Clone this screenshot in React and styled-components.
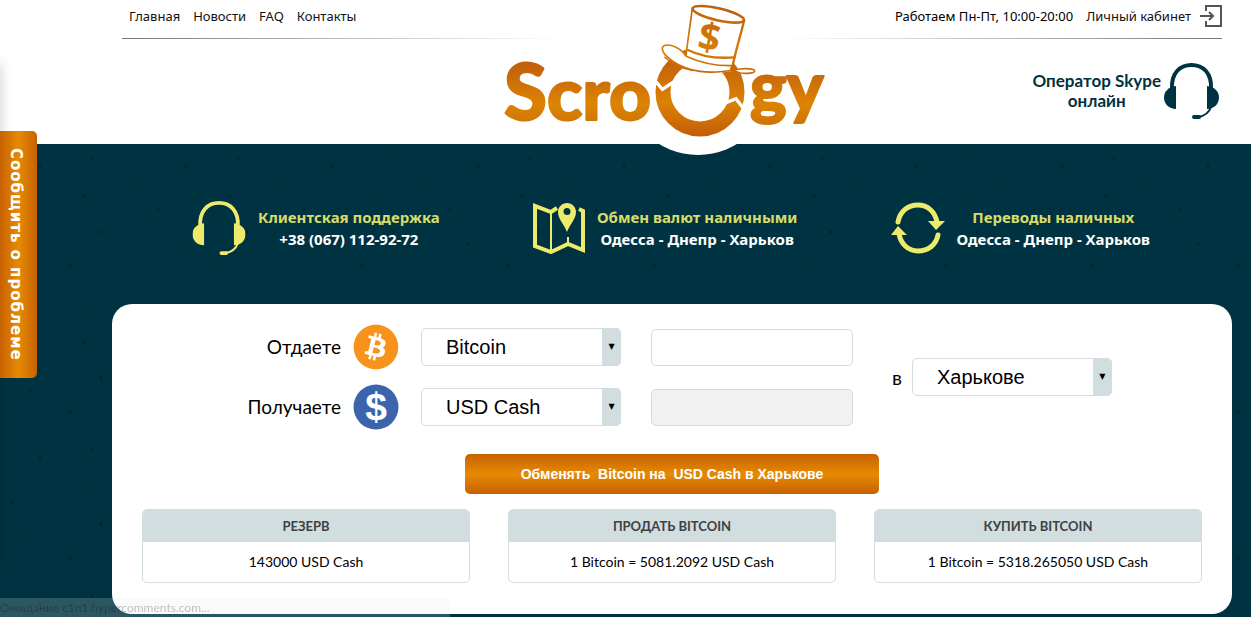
import React, { useState } from 'react'
import styled, { createGlobalStyle } from 'styled-components'
import { FaBitcoin } from 'react-icons/fa'

const GlobalStyle = createGlobalStyle`
  * { box-sizing: border-box; }
  body {
    margin: 0;
    background: #003341;
    color: #000;
    font-family: Lato, 'Noto Sans', sans-serif;
  }
`

const Page = styled.div`
  min-height: 100vh;
  background-color: #003341;
  background-image:
    radial-gradient(circle at 40px 20px, #001a26 0, transparent 2px),
    radial-gradient(circle at 101px 86px, #001a26 0, transparent 2px),
    radial-gradient(circle at 70px 120px, #00222e 0, transparent 2px),
    radial-gradient(circle at 12px 64px, #00222e 0, transparent 2px),
    radial-gradient(circle at 128px 38px, #00222e 0, transparent 2px),
    radial-gradient(circle at 92px 12px, #00222e 0, transparent 2px),
    radial-gradient(circle at 30px 98px, #00222e 0, transparent 2px),
    radial-gradient(circle at 84px 50px, #00222e 0, transparent 2px);
  background-size: 146px 146px;
`

const Header = styled.header`
  background: #fff;
  padding-left: 93px;
`

const HeaderInner = styled.div`
  max-width: 1100px;
  margin: 0 auto;
  display: grid;
  grid-template-columns: 1fr;
  grid-template-rows: 39px 105px;
`

const TopBar = styled.div`
  grid-area: 1 / 1;
  display: flex;
  justify-content: space-between;
  padding: 0 0 7px 7px;
  background: linear-gradient(to right, #777 0, #fff 40%, #fff 60%, #777 100%) bottom / 100% 1px no-repeat;
`

const Nav = styled.nav`
  display: flex;
  align-items: center;
  gap: 13px;
`

const NavLink = styled.a`
  color: #111;
  font-family: 'Noto Sans', sans-serif;
  font-size: 13px;
  line-height: 18px;
  text-decoration: none;
`

const Hours = styled.span`
  font-family: 'Noto Sans', sans-serif;
  font-size: 13px;
  line-height: 18px;
`

const AccountLink = styled(NavLink)`
  display: flex;
  align-items: center;
  gap: 9px;
`

const LogoLink = styled.a`
  grid-area: 1 / 1 / 3 / 2;
  justify-self: center;
  z-index: 1;
  margin-bottom: -12px;
  margin-right: 8px;

  svg { display: block; }
`

const Operator = styled.a`
  grid-area: 2 / 1;
  justify-self: end;
  align-self: start;
  display: flex;
  align-items: center;
  gap: 3px;
  padding: 24px 3px 0 0;
  color: #003341;
  font-size: 17px;
  font-weight: 700;
  line-height: 20px;
  text-align: center;
  text-decoration: none;
`

const Main = styled.main`
  padding-left: 93px;
`

const Content = styled.div`
  max-width: 1120px;
  margin: 0 auto;
`

const Features = styled.section`
  display: flex;
  justify-content: space-between;
  padding: 57px 82px 49px 80px;
`

const Feature = styled.div`
  display: flex;
  align-items: center;
  gap: 12px;
  color: #fff;
  font-family: 'Noto Sans', sans-serif;
  font-size: 15px;
  font-weight: 700;
  line-height: 22px;
  text-align: center;
`

const FeatureTitle = styled.div`
  color: #d8dc6a;
`

const Card = styled.form`
  background: #fff;
  border-radius: 20px;
  padding: 20px 30px 31px;
`

const Exchange = styled.div`
  display: flex;
  align-items: center;
`

const Rows = styled.div`
  display: flex;
  flex-direction: column;
  gap: 14px;
`

const Row = styled.div`
  display: flex;
  align-items: center;
`

const Label = styled.label`
  width: 199px;
  margin-right: 12px;
  font-size: 19px;
  line-height: 24px;
  text-align: right;
`

const Coin = styled.span`
  display: flex;
  width: 46px;
  height: 46px;
  margin-right: 22px;
  color: #f7931a;
`

const SelectBox = styled.div`
  position: relative;
  width: 200px;

  &::after {
    content: '▼';
    position: absolute;
    top: 0;
    right: 0;
    bottom: 0;
    width: 19px;
    border-radius: 0 5px 5px 0;
    background: #d1dddf;
    font: 8px/38px 'DejaVu Sans', sans-serif;
    text-align: center;
    pointer-events: none;
  }
`

const Select = styled.select`
  display: block;
  width: 100%;
  height: 38px;
  padding: 0 24px;
  appearance: none;
  border: 1px solid #d1dddf;
  border-radius: 5px;
  background: #fff;
  color: #000;
  font: 20px 'Liberation Sans', Arial, sans-serif;
`

const Amount = styled.input`
  width: 202px;
  height: 37px;
  margin-left: 30px;
  padding: 0 10px;
  border: 1px solid #d3dcdc;
  border-radius: 5px;
  background: #fff;
  font: 20px 'Liberation Sans', Arial, sans-serif;

  &:disabled { background: #f1f1f1; }
`

const City = styled.div`
  display: flex;
  align-items: center;
  gap: 10px;
  margin-left: 39px;
`

const CityLabel = styled.label`
  font-size: 20px;
  line-height: 24px;
`

const Submit = styled.button`
  display: block;
  width: 414px;
  height: 40px;
  margin: 24px auto 15px;
  border: 0;
  border-radius: 5px;
  background: linear-gradient(#c76100, #e68a04 50%, #c76100);
  color: #fff;
  font: bold 14px 'Liberation Sans', Arial, sans-serif;
  white-space: pre;
`

const Rates = styled.div`
  display: grid;
  grid-template-columns: repeat(3, 1fr);
  gap: 38px;
`

const Rate = styled.section`
  border: 1px solid #d1dddf;
  border-radius: 5px;
  overflow: hidden;
  text-align: center;
`

const RateTitle = styled.h2`
  margin: 0;
  background: #d1dddf;
  color: #3c4244;
  font-size: 13px;
  line-height: 32px;
`

const RateValue = styled.p`
  margin: 0;
  font-size: 14px;
  line-height: 40px;
`

const ReportTab = styled.button`
  position: fixed;
  top: 131px;
  left: 0;
  z-index: 2;
  width: 37px;
  height: 247px;
  padding: 0 6px 0 0;
  border: 0;
  border-radius: 0 5px 5px 0;
  background: linear-gradient(to right, #c76100, #e68a04 50%, #c76100);
  color: #fff;
  font: bold 15px 'DejaVu Sans', Verdana, sans-serif;
  letter-spacing: 1px;
  writing-mode: vertical-rl;
`

const SidePanel = styled.aside`
  position: fixed;
  top: 64px;
  bottom: 60px;
  left: -20px;
  width: 20px;
  box-shadow: 0 0 14px rgba(0, 0, 0, 0.2);
`

const StatusBar = styled.div`
  position: fixed;
  bottom: 0;
  left: 0;
  width: 450px;
  height: 19px;
  border-radius: 0 4px 0 0;
  background: rgba(225, 232, 234, 0.2);
  color: rgba(0, 0, 0, 0.25);
  font: 12px/20px Lato, 'Noto Sans', sans-serif;
`

function Logo() {
  return (
    <svg width="350" height="156" viewBox="493 0 350 156" role="img" aria-label="Scroogy">
      <defs>
        <linearGradient id="word" gradientUnits="userSpaceOnUse" x1="0" y1="58" x2="0" y2="124">
          <stop offset="0" stopColor="#bd5a0c" />
          <stop offset=".7" stopColor="#dc8403" />
          <stop offset="1" stopColor="#cf7406" />
        </linearGradient>
        <linearGradient id="ring" gradientUnits="userSpaceOnUse" x1="0" y1="60" x2="0" y2="137">
          <stop offset="0" stopColor="#c4600a" />
          <stop offset=".55" stopColor="#db8203" />
          <stop offset="1" stopColor="#c25c08" />
        </linearGradient>
        <linearGradient id="hat" gradientUnits="userSpaceOnUse" x1="0" y1="10" x2="0" y2="220">
          <stop offset="0" stopColor="#bd5a0c" />
          <stop offset=".6" stopColor="#d67c05" />
          <stop offset="1" stopColor="#c8680a" />
        </linearGradient>
      </defs>
      <circle cx="698" cy="80" r="75" fill="#fff" />
      <g fill="url(#word)" stroke="url(#word)" strokeWidth="2" strokeLinejoin="round" fontFamily="Lato, sans-serif" fontWeight="900">
        <text x="504" y="120"><tspan fontSize="78">S</tspan><tspan fontSize="73">cro</tspan></text>
        <text x="750" y="111" fontSize="69">gy</text>
      </g>
      <circle cx="700" cy="92" r="37" fill="#fff" stroke="url(#ring)" strokeWidth="15" />
      <g transform="translate(490 0) scale(.3333)">
        <g fill="none" stroke="#fff" strokeWidth="10">
          <path d="M490 236l27 32 34-22" />
          <path d="M702 310l36-14 26 34" />
        </g>
        <path d="M590 168C560 132 520 130 517 144c-2 22 50 62 113 72 50 8 88-2 120-7 22-3 43 0 43 5 0 7-24 8-42 6-14-2-20-8-30-14L735 120 590 120z" fill="#fff" />
        <path d="M608 24L588 170c40 18 90 30 138 28L763 60z" fill="#fff" />
        <g fill="none" stroke="url(#hat)" strokeLinecap="round" strokeLinejoin="round">
          <path d="M588 168C562 132 520 128 517 144c-2 22 50 62 113 70 50 7 88-2 120-7 22-3 44 0 44 6 0 7-24 8-42 6-14-2-20-6-30-12" strokeWidth="5" />
          <path d="M524 172c24 22 52 34 84 40" strokeWidth="4" />
          <path d="M607 24c-6 50-14 98-19 144" strokeWidth="5" />
          <path d="M762 62c-10 46-26 92-34 136" strokeWidth="7" />
          <ellipse cx="685" cy="43" rx="79" ry="18" transform="rotate(13 685 43)" strokeWidth="8" />
          <path d="M594 150c40 20 92 26 140 22" strokeWidth="7" />
          <path d="M592 170c40 18 90 28 134 27" strokeWidth="5" />
        </g>
        <text x="658" y="153" transform="rotate(10 658 114)" textAnchor="middle" fill="url(#hat)" fontFamily="'Open Sans', sans-serif" fontWeight="700" fontSize="116">$</text>
      </g>
    </svg>
  )
}

function Headset() {
  return (
    <svg width="55" height="56" viewBox="0 0 55 56" fill="currentColor" aria-hidden="true">
      <path d="M8 26C7 10 16 2 27.500 2S48 10 47 26" fill="none" stroke="currentColor" strokeWidth="4" />
      <path d="M12 23v23C5 46 0 41 0 34.500S5 24 12 23z" />
      <path d="M43 23v23c7 0 12-5 12-11.500S50 24 43 23z" />
      <path d="M47 44c-2 6-6 9-13 10" fill="none" stroke="currentColor" strokeWidth="2" />
      <rect x="28" y="52" width="9" height="4" rx="2" />
    </svg>
  )
}

function MapIcon() {
  return (
    <svg width="52" height="52" viewBox="0 0 52 52" fill="none" stroke="#eeea6b" aria-hidden="true">
      <path d="M24 6l-6 4L2 4v40l16 6 17-8 15 6V9l-4-2" strokeWidth="4" />
      <path d="M18 10v40M35 35v8" strokeWidth="2" />
      <path d="M34 1c-5 0-9 4-9 9 0 7 6 12 9 20 3-8 9-13 9-20 0-5-4-9-9-9zm0 5a3 3 0 1 1 0 7 3 3 0 0 1 0-7z" fill="#eeea6b" stroke="none" />
    </svg>
  )
}

function TransferIcon() {
  return (
    <svg width="54" height="52" viewBox="0 0 54 52" fill="#eeea6b" aria-hidden="true">
      <g fill="none" stroke="#eeea6b" strokeWidth="5" strokeLinecap="round">
        <path d="M7 20C9 9 17 3 27 3S44 10 46 20" />
        <path d="M47 33C45 43 37 49 27 49S10 42 8 32" />
      </g>
      <path d="M37 19h17l-9 9zM0 33h16l-9-9z" />
    </svg>
  )
}

function LoginIcon() {
  return (
    <svg width="22" height="22" viewBox="0 0 22 22" fill="none" stroke="#555" strokeWidth="2" aria-hidden="true">
      <path d="M6 6V1h15v20H6v-5M0 11h12M9 7l4 4-4 4" />
    </svg>
  )
}

function DollarCoin() {
  return (
    <svg width="46" height="46" viewBox="0 0 46 46" aria-hidden="true">
      <circle cx="23" cy="23" r="22.500" fill="#3b64ad" />
      <text x="23" y="36" textAnchor="middle" fill="#fff" fontFamily="'Liberation Sans', sans-serif" fontWeight="700" fontSize="39">$</text>
    </svg>
  )
}

const links = ['Главная', 'Новости', 'FAQ', 'Контакты']

function App() {
  const [give, setGive] = useState('Bitcoin')
  const [take, setTake] = useState('USD Cash')
  const [city, setCity] = useState('Харькове')

  return (
    <>
      <GlobalStyle />
      <Page>
        <Header>
          <HeaderInner>
            <TopBar>
              <Nav>
                {links.map(link => <NavLink href="#" key={link}>{link}</NavLink>)}
              </Nav>
              <Nav>
                <Hours>Работаем Пн-Пт, 10:00-20:00</Hours>
                <AccountLink href="#">Личный кабинет <LoginIcon /></AccountLink>
              </Nav>
            </TopBar>
            <LogoLink href="#"><Logo /></LogoLink>
            <Operator href="#">
              <span>Оператор Skype<br />онлайн</span>
              <Headset />
            </Operator>
          </HeaderInner>
        </Header>
        <Main>
          <Content>
            <Features>
              <Feature>
                <svg width="54" height="54" viewBox="0 0 55 56" color="#eeea6b"><Headset /></svg>
                <div>
                  <FeatureTitle>Клиентская поддержка</FeatureTitle>
                  +38 (067) 112-92-72
                </div>
              </Feature>
              <Feature>
                <MapIcon />
                <div>
                  <FeatureTitle>Обмен валют наличными</FeatureTitle>
                  Одесса - Днепр - Харьков
                </div>
              </Feature>
              <Feature>
                <TransferIcon />
                <div>
                  <FeatureTitle>Переводы наличных</FeatureTitle>
                  Одесса - Днепр - Харьков
                </div>
              </Feature>
            </Features>
            <Card onSubmit={e => e.preventDefault()}>
              <Exchange>
                <Rows>
                  <Row>
                    <Label htmlFor="give">Отдаете</Label>
                    <Coin><FaBitcoin size={46} /></Coin>
                    <SelectBox>
                      <Select id="give" value={give} onChange={e => setGive(e.target.value)}>
                        <option>Bitcoin</option>
                        <option>USD Cash</option>
                      </Select>
                    </SelectBox>
                    <Amount aria-label="Отдаете, сумма" />
                  </Row>
                  <Row>
                    <Label htmlFor="take">Получаете</Label>
                    <Coin><DollarCoin /></Coin>
                    <SelectBox>
                      <Select id="take" value={take} onChange={e => setTake(e.target.value)}>
                        <option>USD Cash</option>
                        <option>Bitcoin</option>
                      </Select>
                    </SelectBox>
                    <Amount aria-label="Получаете, сумма" disabled />
                  </Row>
                </Rows>
                <City>
                  <CityLabel htmlFor="city">в</CityLabel>
                  <SelectBox>
                    <Select id="city" value={city} onChange={e => setCity(e.target.value)}>
                      <option>Харькове</option>
                      <option>Одессе</option>
                      <option>Днепре</option>
                    </Select>
                  </SelectBox>
                </City>
              </Exchange>
              <Submit type="submit">{`Обменять  ${give} на  ${take} в ${city}`}</Submit>
              <Rates>
                <Rate>
                  <RateTitle>РЕЗЕРВ</RateTitle>
                  <RateValue>143000 USD Cash</RateValue>
                </Rate>
                <Rate>
                  <RateTitle>ПРОДАТЬ BITCOIN</RateTitle>
                  <RateValue>1 Bitcoin = 5081.2092 USD Cash</RateValue>
                </Rate>
                <Rate>
                  <RateTitle>КУПИТЬ BITCOIN</RateTitle>
                  <RateValue>1 Bitcoin = 5318.265050 USD Cash</RateValue>
                </Rate>
              </Rates>
            </Card>
          </Content>
        </Main>
      </Page>
      <SidePanel />
      <ReportTab type="button">Сообщить о проблеме</ReportTab>
      <StatusBar>Ожидание c1n1.hypercomments.com...</StatusBar>
    </>
  )
}

export default App
